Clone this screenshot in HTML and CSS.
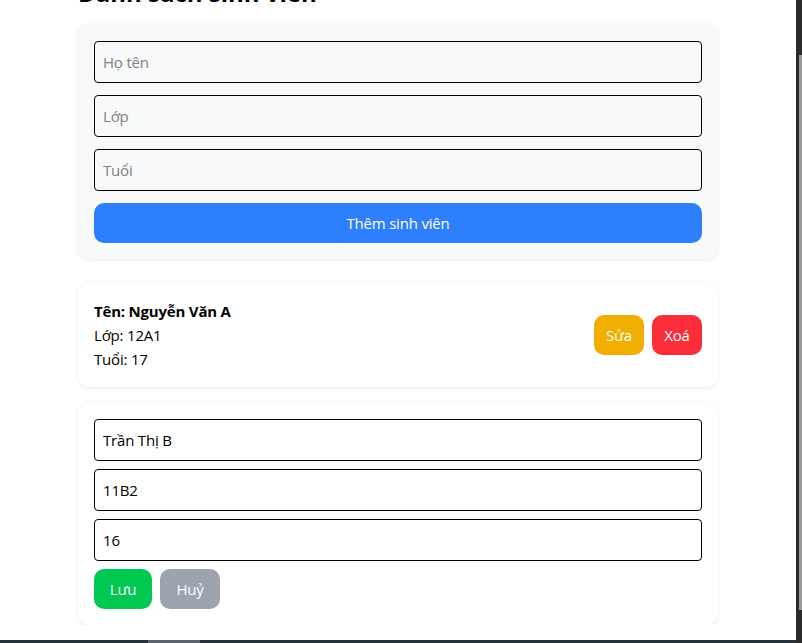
FILE: index.html
```
<!DOCTYPE html>
<html lang="vi">
<head>
<meta charset="utf-8">
<title>Danh sách sinh viên</title>
<link rel="stylesheet" href="styles.css">
</head>
<body>
<main class="page">
  <h1 class="title">Danh sách sinh viên</h1>
  <section class="card card-form">
    <input class="field" type="text" placeholder="Họ tên">
    <input class="field" type="text" placeholder="Lớp">
    <input class="field" type="text" placeholder="Tuổi">
    <button class="btn btn-primary">Thêm sinh viên</button>
  </section>
  <section class="card card-item">
    <div class="info">
      <div class="name">Tên: Nguyễn Văn A</div>
      <div>Lớp: 12A1</div>
      <div>Tuổi: 17</div>
    </div>
    <div class="actions">
      <button class="btn btn-warn">Sửa</button>
      <button class="btn btn-danger">Xoá</button>
    </div>
  </section>
  <section class="card card-edit">
    <input class="field field-edit" type="text" value="Trần Thị B">
    <input class="field field-edit" type="text" value="11B2">
    <input class="field field-edit" type="text" value="16">
    <div class="actions">
      <button class="btn btn-success">Lưu</button>
      <button class="btn btn-muted">Huỷ</button>
    </div>
  </section>
</main>
<div class="vscroll"><div class="vthumb"></div></div>
<div class="hscroll"><div class="hthumb"></div></div>
</body>
</html>
```
FILE: styles.css
```
* { box-sizing: border-box; }
html, body { margin: 0; padding: 0; background: #fff; overflow: hidden; }
body {
  font-family: "Open Sans", "Noto Sans", sans-serif;
  font-size: 15px;
  letter-spacing: -0.2px;
  color: #000;
}
.page {
  width: 640px;
  margin-left: 78px;
}
.title {
  margin: -23px 0 15px;
  font-size: 24px;
  line-height: 32px;
  font-weight: 700;
  letter-spacing: 0;
}
.card {
  border-radius: 12px;
  padding: 16px;
  background: #fff;
  box-shadow: 0 1px 4px rgba(0,0,0,0.09);
}
.card-form {
  background: #f8f9fb;
  display: flex;
  flex-direction: column;
  gap: 12px;
  padding-top: 17px;
}
.field {
  display: block;
  width: 100%;
  height: 42px;
  border: 1px solid #000;
  border-radius: 4px;
  background: #f8f9fb;
  padding: 0 8px;
  font: inherit;
  letter-spacing: -0.2px;
  color: #000;
  outline: none;
}
.field::placeholder { color: #808080; }
.field-edit { background: #fff; }
.btn {
  height: 40px;
  border: none;
  border-radius: 10px;
  color: #fff;
  font: inherit;
  letter-spacing: -0.2px;
  padding: 0 12px;
  cursor: pointer;
}
.btn-primary { background: #2d7ffb; width: 100%; }
.card-item {
  margin-top: 24px;
  display: flex;
  align-items: center;
  justify-content: space-between;
  line-height: 24px;
}
.name { font-weight: 700; }
.actions { display: flex; gap: 8px; }
.btn-warn { background: #f0ae00; width: 50px; padding: 0; }
.btn-danger { background: #fc2d3b; width: 50px; padding: 0; }
.card-edit {
  margin-top: 16px;
  display: flex;
  flex-direction: column;
  gap: 8px;
}
.btn-success { background: #00c853; width: 58px; padding: 0; }
.btn-muted { background: #9ca3af; width: 60px; padding: 0; }
.vscroll {
  position: fixed;
  top: 0; right: 0;
  width: 6px; height: 643px;
  background: #2b2b2b;
}
.vthumb {
  position: absolute;
  top: 55px; right: 0;
  width: 3px; height: 555px;
  background: #9a9a9a;
}
.hscroll {
  position: fixed;
  left: 0; bottom: 0;
  width: 796px; height: 3px;
  background: #283339;
}
.hthumb {
  position: absolute;
  left: 148px; top: 0;
  width: 52px; height: 3px;
  background: #5b6469;
}
```
